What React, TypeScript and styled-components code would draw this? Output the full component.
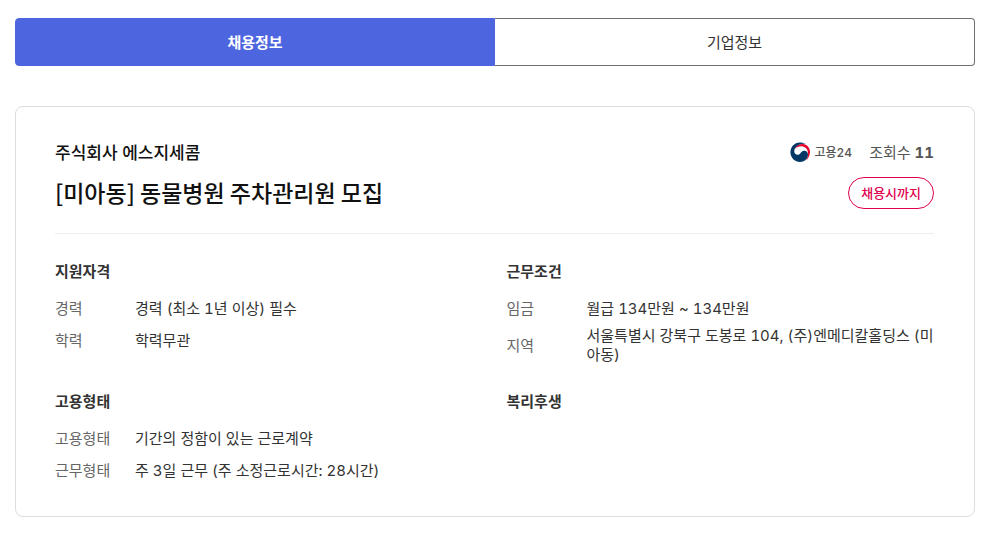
import React from "react";
import styled, { createGlobalStyle } from "styled-components";

const GlobalStyle = createGlobalStyle`
  *, *::before, *::after { box-sizing: border-box; }
  body {
    margin: 0;
    background: #fff;
    color: #333;
    font-family: Inter, "Noto Sans CJK KR", sans-serif;
    font-size: 15px;
    line-height: 19px;
    font-variant-numeric: tabular-nums;
  }
  h1, h2, p, dl, dd { margin: 0; }
`;

const Page = styled.main`
  padding: 18px 25px 24px 15px;
`;

const Tabs = styled.div`
  display: grid;
  grid-template-columns: 1fr 1fr;
  margin-bottom: 40px;
`;

const Tab = styled.button<{ $active?: boolean }>`
  height: 48px;
  padding: 0;
  border: 1px solid ${(p) => (p.$active ? "#4d66e0" : "#707070")};
  border-left-width: ${(p) => (p.$active ? "1px" : "0")};
  border-radius: ${(p) => (p.$active ? "4px 0 0 4px" : "0 4px 4px 0")};
  background: ${(p) => (p.$active ? "#4d66e0" : "#fff")};
  color: ${(p) => (p.$active ? "#fff" : "#333")};
  font: inherit;
  font-weight: ${(p) => (p.$active ? 700 : 400)};
  cursor: pointer;
`;

const Card = styled.article`
  padding: 32px 40px 32px 39px;
  border: 1px solid #ddd;
  border-radius: 8px;
`;

const Header = styled.header`
  display: flex;
  justify-content: space-between;
  gap: 24px;
  padding-bottom: 24px;
  border-bottom: 1px solid #eee;
`;

const Heading = styled.div`
  display: flex;
  flex-direction: column;
  justify-content: center;
  gap: 10px;
  color: #111;
`;

const Company = styled.p`
  font-size: 17px;
  line-height: 26px;
  font-weight: 500;
`;

const Title = styled.h1`
  font-family: "Noto Sans CJK KR", sans-serif;
  font-size: 23px;
  line-height: 32px;
  font-weight: 500;
`;

const Meta = styled.div`
  display: flex;
  flex-direction: column;
  align-items: flex-end;
  gap: 12px;
`;

const MetaLine = styled.div`
  display: flex;
  align-items: center;
  gap: 17px;
  height: 26px;
  color: #555;
`;

const Source = styled.a`
  display: flex;
  align-items: center;
  gap: 4px;
  color: #555;
  font-size: 12px;
  font-weight: 500;
  text-decoration: none;
`;

const Badge = styled.span`
  height: 32px;
  padding: 0 12px;
  border: 1px solid #e0004d;
  border-radius: 16px;
  color: #e0004d;
  font-size: 13px;
  line-height: 30px;
  font-weight: 500;
`;

const Sections = styled.div`
  display: grid;
  grid-template-columns: 1fr 1fr;
  gap: 28px 24px;
  padding-top: 28px;
`;

const SectionTitle = styled.h2`
  margin-bottom: 13px;
  font-size: 15px;
  line-height: 19px;
  font-weight: 700;
`;

const List = styled.dl`
  display: grid;
  grid-auto-rows: minmax(28px, auto);
  gap: 4px;
`;

const Row = styled.div`
  display: grid;
  grid-template-columns: 80px 1fr;
  align-items: center;
`;

const Term = styled.dt`
  color: #666;
`;

const Value = styled.dd`
  word-break: break-all;
`;

const sections = [
  { title: "지원자격", rows: [["경력", "경력 (최소 1년 이상) 필수"], ["학력", "학력무관"]] },
  {
    title: "근무조건",
    rows: [["임금", "월급 134만원 ~ 134만원"], ["지역", "서울특별시 강북구 도봉로 104, (주)엔메디칼홀딩스 (미아동)"]],
  },
  {
    title: "고용형태",
    rows: [["고용형태", "기간의 정함이 있는 근로계약"], ["근무형태", "주 3일 근무 (주 소정근로시간: 28시간)"]],
  },
  { title: "복리후생", rows: [] },
];

const Emblem = () => (
  <svg width="21" height="21" viewBox="0 0 21 21" aria-hidden="true">
    <path
      fill="#e4002b"
      d="M5 5.800C8 2 13 1 16.500 3.200c4.500 3 5.200 10.300-1 15.800 3.300-4.600 3.500-10.200.3-13C12.800 3.500 8 3.600 4.400 7.200Z"
    />
    <path
      fill="#003764"
      d="M16.300 2.300C12-.5 6-.3 2.700 3.800-.6 8-.3 14 3.500 17.500c4 3.600 10 3.200 13-.7 1.800-2.400 2-5.600.2-7.200-1.500-1.300-3.900-1.100-5.300.5-.9 1.100-1.400 2.200-2.900 2.600-2 .5-4-.9-4.200-3C4 6.800 5.700 4.600 8 3.200c2.600-1.500 5.600-1.700 8.300-.9Z"
    />
  </svg>
);

export default function App() {
  return (
    <>
      <GlobalStyle />
      <Page>
        <Tabs role="tablist">
          <Tab type="button" role="tab" aria-selected $active>채용정보</Tab>
          <Tab type="button" role="tab" aria-selected={false}>기업정보</Tab>
        </Tabs>
        <Card>
          <Header>
            <Heading>
              <Company>주식회사 에스지세콤</Company>
              <Title>[미아동] 동물병원 주차관리원 모집</Title>
            </Heading>
            <Meta>
              <MetaLine>
                <Source href="#"><Emblem />고용24</Source>
                <span>조회수 <b>11</b></span>
              </MetaLine>
              <Badge>채용시까지</Badge>
            </Meta>
          </Header>
          <Sections>
            {sections.map((section) => (
              <section key={section.title}>
                <SectionTitle>{section.title}</SectionTitle>
                <List>
                  {section.rows.map(([term, value]) => (
                    <Row key={term}>
                      <Term>{term}</Term>
                      <Value>{value}</Value>
                    </Row>
                  ))}
                </List>
              </section>
            ))}
          </Sections>
        </Card>
      </Page>
    </>
  );
}
